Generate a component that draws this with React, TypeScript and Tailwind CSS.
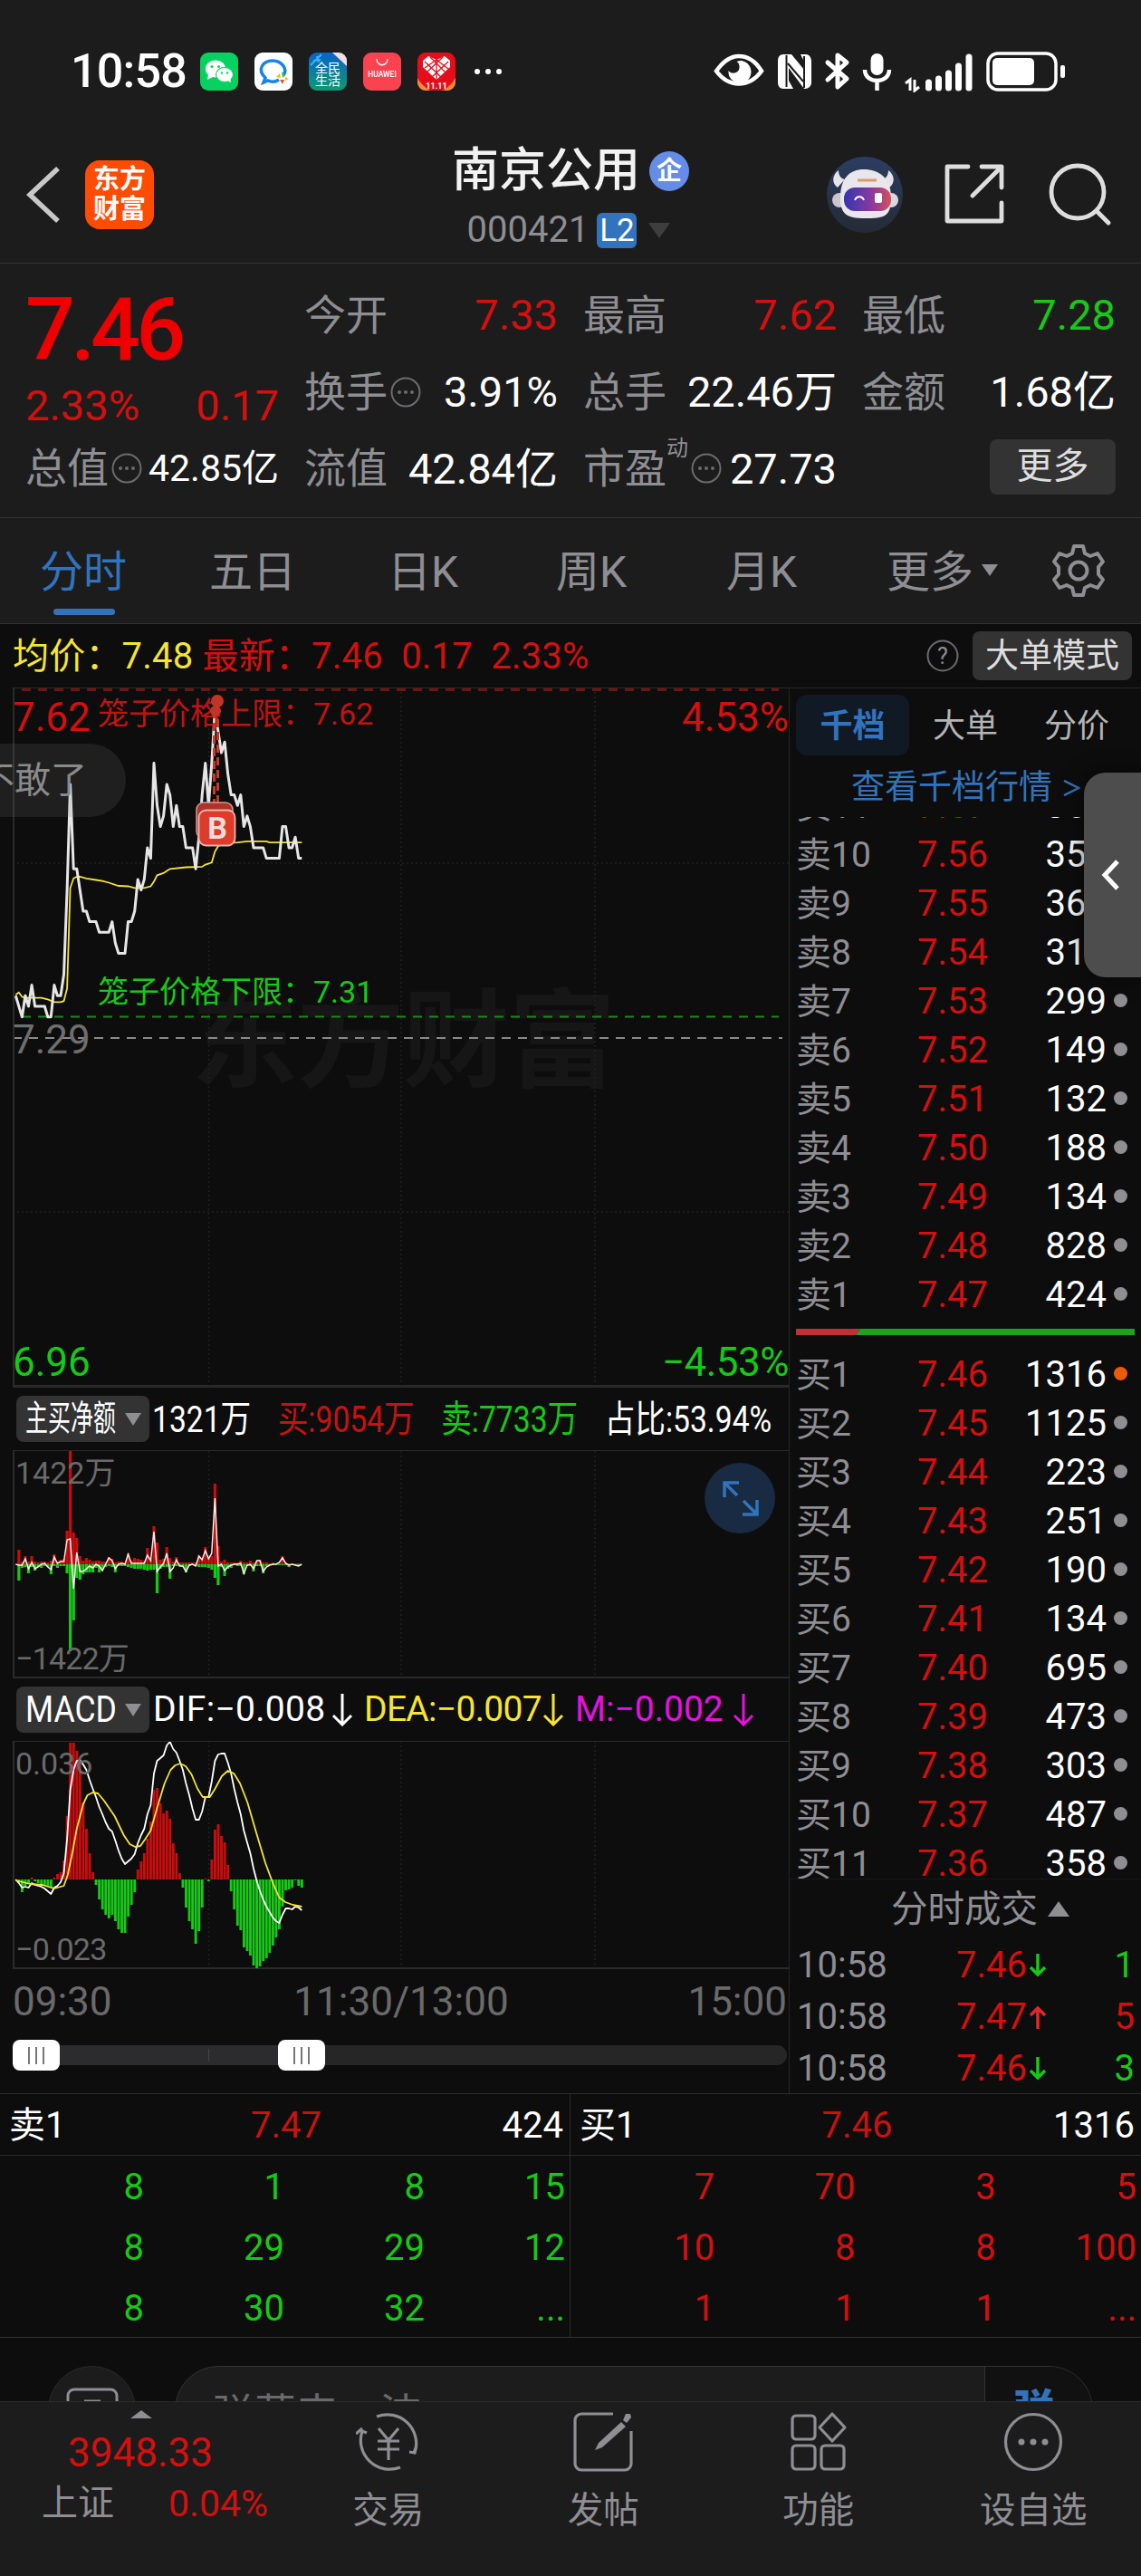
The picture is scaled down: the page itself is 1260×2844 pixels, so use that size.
import type { ReactNode } from "react";
import clsx from "clsx";

const MINUTE = 3.55;
const X0 = 3.3;

// minute prices, in cents above the previous close (7.29)
const PRICES = [
  4, 3, 2, 4, 3, 5, 3, 3, 3, 3, 2, 2, 5, 4, 4, 6, 14, 24, 16, 16, 14, 12, 12, 11, 11, 11, 10, 10, 10, 10,
  11, 9, 8, 8, 8, 11, 11, 12, 15, 14, 15, 18, 17, 26, 22, 20, 21, 24, 23, 20, 22, 20, 20, 18, 18, 18, 16, 19, 23, 26,
  22, 26, 31, 29, 27, 28, 25, 23, 23, 22, 23, 20, 21, 20, 18, 18, 18, 18, 17, 17, 17, 17, 17, 20, 20, 18, 18, 19, 17, 17,
];

// [minute, cents above previous close]
const AVERAGE: [number, number][] = [
  [0, 4.1], [1, 4.3], [2, 3.9], [3, 3.8], [8, 3.8], [10, 3.65], [12, 3.4], [14, 3.4], [15, 3.5], [16, 4.7], [17, 14.2],
  [18, 15.1], [19, 15.25], [20, 15.25], [22, 15.1], [25, 14.95], [27, 14.85], [29, 14.7], [32, 14.4], [35, 14.35],
  [37, 14.2], [40, 14.2], [42, 14.35], [43, 14.8], [44, 15.4], [46, 15.6], [47, 15.8], [48, 16], [53, 16.15],
  [58, 16.2], [59, 16.4], [61, 16.6], [62, 17.65], [63, 18.15], [64, 18.3], [66, 18.45], [69, 18.5], [72, 18.6],
  [78, 18.6], [79, 18.5], [89, 18.5],
];

const BUY = [
  0, 16, 3, 9, 3, 9, 3, 2, 3, 3, 2, 4, 11, 3, 5, 6, 37, 125, 35, 29, 9, 4, 7, 5, 3, 4, 4, 3, 3, 8,
  6, 2, 3, 3, 2, 12, 4, 7, 6, 5, 4, 18, 5, 42, 24, 5, 6, 19, 7, 3, 8, 2, 2, 2, 2, 2, 2, 10, 6, 19,
  8, 9, 89, 20, 3, 5, 2, 2, 2, 2, 4, 2, 2, 4, 2, 3, 5, 2, 2, 1, 2, 1, 2, 9, 2, 1, 1, 1, 1, 0,
];
const SELL = [
  0, 18, 4, 3, 10, 3, 7, 3, 4, 2, 3, 11, 2, 4, 2, 2, 10, 96, 62, 15, 17, 11, 9, 9, 9, 4, 9, 5, 3, 2,
  3, 9, 2, 2, 2, 3, 4, 5, 5, 5, 6, 7, 6, 6, 32, 5, 3, 3, 16, 2, 2, 2, 3, 9, 2, 1, 2, 3, 3, 3,
  4, 6, 15, 23, 3, 13, 5, 4, 1, 2, 2, 11, 2, 2, 8, 2, 2, 10, 2, 1, 1, 1, 1, 1, 1, 3, 1, 1, 1, 0,
];
const NET = [
  0, -1, -1, 6, -5, 2, -5, -3, 0, 1, -3, -6, 8, 1, 3, 3, 27, 28, -27, 13, -8, -8, -5, -2, -4, 0, -2, -7, 0, 7,
  4, -5, 0, 1, 0, 11, 1, 1, 1, 1, 1, 10, 4, 36, -8, -3, 1, 12, -8, -4, 5, -2, -2, -8, -1, 0, -2, 9, 5, 15,
  6, 12, 73, -2, 0, -7, -3, -1, 0, 0, 1, -10, -1, 0, -5, 4, 4, -8, -3, -1, 0, 0, 2, 7, 1, -1, 0, -1, -2, 0,
];

const MACD = [
  0, -4, -14, -7, -5, 2, -2, -4, -5, -7, -8, -9, 2, 6, 8, 21, 70, 151, 151, 142, 129, 85, 56, 29, 8, -6, -22, -33, -39, -43,
  -39, -46, -55, -59, -59, -41, -28, -14, 11, 20, 29, 45, 64, 99, 101, 84, 73, 76, 67, 40, 29, 7, -9, -31, -46, -55, -71, -57, -31, 1,
  -2, 22, 55, 61, 48, 41, 16, -13, -33, -51, -56, -75, -79, -84, -95, -98, -96, -90, -87, -81, -73, -64, -55, -30, -12, -11, -9, -1, -7, -9,
];
const DIF = [
  0, -4, -9, -8, -9, -4, -6, -7, -8, -10, -13, -16, -9, -7, -3, 7, 45, 99, 121, 131, 132, 127, 121, 110, 100, 91, 80, 72, 63, 56,
  53, 43, 32, 23, 17, 20, 23, 28, 40, 49, 56, 72, 82, 117, 131, 134, 137, 148, 152, 144, 140, 131, 121, 106, 93, 78, 66, 66, 75, 91,
  91, 108, 131, 138, 139, 139, 129, 117, 100, 85, 72, 54, 41, 29, 12, -2, -13, -22, -30, -36, -42, -46, -48, -39, -32, -32, -33, -30, -31, -34,
];
const DEA: [number, number][] = [
  [0, -1], [4.5, -5], [8.3, -6], [12, -10], [15, -7], [16.2, 5], [17.6, 29], [19, 56], [21, 83], [22.3, 93], [24, 96],
  [25.6, 95], [27.5, 87], [30.8, 70], [33.6, 49], [35.5, 39], [37.2, 36], [38.8, 37], [40.2, 44], [42, 54], [44, 79],
  [46.3, 106], [48.2, 121], [49.6, 126], [51.2, 128], [52.9, 125], [54.7, 116], [56.6, 100], [58.2, 91], [60.4, 91],
  [62, 100], [64.1, 114], [66, 120], [67.9, 117], [69.8, 106], [72.1, 85], [74.9, 51], [77.7, 18], [80.1, -5],
  [82, -20], [83.9, -25], [86.2, -28], [89, -30],
];

const SELLS: [string, string, string][] = [
  ["卖11", "7.57", "361"],
  ["卖10", "7.56", "350"],
  ["卖9", "7.55", "362"],
  ["卖8", "7.54", "314"],
  ["卖7", "7.53", "299"],
  ["卖6", "7.52", "149"],
  ["卖5", "7.51", "132"],
  ["卖4", "7.50", "188"],
  ["卖3", "7.49", "134"],
  ["卖2", "7.48", "828"],
  ["卖1", "7.47", "424"],
];

const BUYS: [string, string, string][] = [
  ["买1", "7.46", "1316"],
  ["买2", "7.45", "1125"],
  ["买3", "7.44", "223"],
  ["买4", "7.43", "251"],
  ["买5", "7.42", "190"],
  ["买6", "7.41", "134"],
  ["买7", "7.40", "695"],
  ["买8", "7.39", "473"],
  ["买9", "7.38", "303"],
  ["买10", "7.37", "487"],
  ["买11", "7.36", "358"],
];

const TRADES = [
  { time: "10:58", price: "7.46", up: false, volume: "1" },
  { time: "10:58", price: "7.47", up: true, volume: "5" },
  { time: "10:58", price: "7.46", up: false, volume: "3" },
];

function toPoints(values: number[] | [number, number][], zero: number, unit = 1) {
  return values
    .map((v, i) => {
      const [m, n] = Array.isArray(v) ? v : [i, v];
      return `${(X0 + m * MINUTE).toFixed(1)},${(zero - n * unit).toFixed(1)}`;
    })
    .join(" ");
}

function StatusBar() {
  return (
    <div className="flex h-[158px] items-center justify-between pl-[78px] pr-[84px]">
      <div className="flex items-center">
        <span className="w-[143px] text-[52px] font-medium leading-none tracking-[-0.8px] text-white">10:58</span>
        <div className="flex items-center gap-[18px]">
          <svg viewBox="0 0 42 42" className="size-[42px]">
            <rect width="42" height="42" rx="9" fill="#07d160" />
            <ellipse cx="17" cy="18" rx="11" ry="9.500" fill="#fff" />
            <path d="M9 24l-1 6 6-3z" fill="#fff" />
            <ellipse cx="27" cy="24.500" rx="9.500" ry="8" fill="#fff" stroke="#07d160" strokeWidth="1.200" />
            <path d="M30 31l4 2-1-5z" fill="#fff" />
            <g fill="#07d160">
              <circle cx="13" cy="15.500" r="1.500" />
              <circle cx="20.500" cy="15.500" r="1.500" />
              <circle cx="24" cy="22.500" r="1.200" />
              <circle cx="30" cy="22.500" r="1.200" />
            </g>
          </svg>
          <svg viewBox="0 0 42 42" className="size-[42px]">
            <rect width="42" height="42" rx="9" fill="#fff" />
            <path d="M27 30c-3 2-8 3-12 1l-5 2 2-5C2 18 10 9 20 9s17 9 12 16" fill="none" stroke="#1684e8" strokeWidth="3.500" />
            <path d="M30 21l4 4-3 3z" fill="#2ebd59" />
            <path d="M24 27l4-4 1 5z" fill="#fbbc05" />
            <path d="M34 27l4 2-4 2z" fill="#fbbc05" />
            <path d="M28 30l5 0-2 5z" fill="#f04e23" />
          </svg>
          <svg viewBox="0 0 42 42" className="size-[42px]">
            <defs>
              <linearGradient id="life" x2="0" y2="1">
                <stop offset="0" stopColor="#0a62c9" />
                <stop offset="1" stopColor="#0d9a72" />
              </linearGradient>
            </defs>
            <rect width="42" height="42" rx="9" fill="url(#life)" />
            <path d="M2 14L14 2M5 9l8-1M9 4l2 7" stroke="#38b4f0" strokeWidth="2" />
            <path d="M26 0h7a9 9 0 0 1 9 9v6z" fill="#f2dfe2" />
            <g fill="#fff" fontSize="14" textAnchor="middle">
              <text x="14" y="22">全</text>
              <text x="28" y="22">民</text>
              <text x="14" y="36">生</text>
              <text x="28" y="36">活</text>
            </g>
          </svg>
          <svg viewBox="0 0 42 42" className="size-[42px]">
            <rect width="42" height="42" rx="9" fill="#fb4250" />
            <path d="M15 7c0 9 12 9 12 0" fill="none" stroke="#fff" strokeWidth="1.300" />
            <text x="21" y="27" textAnchor="middle" fontSize="8.500" fill="#fff" fontWeight="500">HUAWEI</text>
          </svg>
          <svg viewBox="0 0 42 42" className="size-[42px]">
            <rect width="42" height="42" rx="9" fill="#e60d1a" />
            <path d="M0 28c3 6 8 10 14 14H9a9 9 0 0 1-9-9zM42 28c-3 6-8 10-14 14h5a9 9 0 0 0 9-9z" fill="#f58a3a" />
            <path d="M21 30L6 16V9l6-5 9 4 9-4 6 5v7z" fill="#fff" />
            <path d="M8 10l18 17M14 5l17 17M21 8l13 10M34 10L16 27M28 5L11 21M21 8L8 17M21 4v26" stroke="#e60d1a" strokeWidth="1.300" />
            <text x="21" y="39.500" textAnchor="middle" fontSize="9" fill="#fff" fontWeight="700">11.11</text>
          </svg>
        </div>
        <div className="ml-[21px] flex gap-[6px]">
          <i className="size-[6px] rounded-full bg-white" />
          <i className="size-[6px] rounded-full bg-white" />
          <i className="size-[6px] rounded-full bg-white" />
        </div>
      </div>
      <svg viewBox="0 0 390 46" className="h-[46px] w-[390px]" fill="none">
        {/* eye comfort */}
        <path d="M5 22.500C13 11 21 6 30 6s18 5 25 16.500C48 32 39 36.500 30 36.500S12 32 5 22.500z" stroke="#fff" strokeWidth="4.500" />
        <path d="M33 11a12.500 12.500 0 1 1-14.500 11c2 4 12 4 12-4 0-3-1-5-3-6a12 12 0 0 1 5.500-1z" fill="#fff" />
        <g transform="translate(-3 0)">
          {/* nfc */}
          <path d="M82 4h9l14 17V12l-4-8h6c4 0 6 4 6 8v23c0 4-3 7-7 7h-1L88 19v14l5 9H82c-4 0-6-3-6-7V11c0-4 2-7 6-7z" fill="#fff" />
          <path d="M85.500 5v35M105 6v35M87 14l17 20" stroke="#1c1c1c" strokeWidth="2" />
          {/* bluetooth */}
          <path d="M131 13l21 18-10 9V5l10 8-21 19" stroke="#fff" strokeWidth="5" strokeLinejoin="round" strokeLinecap="round" />
          {/* microphone */}
          <rect x="178.500" y="3" width="14" height="24" rx="7" fill="#fff" />
          <path d="M172 21c0 16 27 16 27 0M185.500 34v10" stroke="#fff" strokeWidth="4.500" />
          {/* signal */}
          <path d="M217 36l5-4v12M232 40l-5 4V32" stroke="#fff" strokeWidth="3" />
          <path d="M242.500 35v6M253.500 31v10M264.500 25v16M275.500 17v24M287 7v34" stroke="#fff" strokeWidth="7" strokeLinecap="round" />
          {/* battery */}
          <rect x="308" y="3" width="75" height="40" rx="11" stroke="#fff" strokeWidth="3.500" />
          <rect x="313" y="8" width="46" height="30" rx="5" fill="#fff" />
          <rect x="388" y="16" width="5" height="14" rx="2" fill="#fff" />
        </g>
      </svg>
    </div>
  );
}

function Robot() {
  return (
    <svg viewBox="0 0 84 84" className="size-[84px]">
      <defs>
        <linearGradient id="robotBg" x2="0" y2="1">
          <stop offset="0" stopColor="#2b3d63" />
          <stop offset="1" stopColor="#252a35" />
        </linearGradient>
        <linearGradient id="visor">
          <stop offset="0" stopColor="#3535b0" />
          <stop offset="0.600" stopColor="#8b3a9c" />
          <stop offset="1" stopColor="#d8505c" />
        </linearGradient>
      </defs>
      <circle cx="42" cy="42" r="42" fill="url(#robotBg)" />
      <path d="M13 15c-7 5-8 14-1 19l8-9c-5-1-7-5-7-10zM68 15c7 5 8 14 1 19l-8-9c5-1 7-5 7-10z" fill="#e6e4e8" />
      <circle cx="14" cy="48" r="8" fill="#c9c6cc" />
      <circle cx="71" cy="48" r="8" fill="#dcd9de" />
      <path d="M15 45c0-21 10-31 26-31s30 9 30 31-8 23-29 23-27-5-27-23z" fill="#e9e7eb" />
      <rect x="19" y="34" width="52" height="26" rx="12" fill="url(#visor)" />
      <path d="M31 48c2-5 8-5 10 0" fill="none" stroke="#fff" strokeWidth="2" />
      <rect x="53" y="40" width="8" height="11" rx="2" fill="#fff" />
      <path d="M34 26h21" stroke="#d99b6c" strokeWidth="3" />
    </svg>
  );
}

function Header() {
  return (
    <header className="grid h-[133px] grid-cols-[1fr_auto_1fr] border-b border-[#343434]">
      <div className="flex items-start pl-[28px] pt-[19px]">
        <svg viewBox="0 0 38 62" className="mt-[7px] h-[62px] w-[38px]" fill="none" stroke="#c8c8c8" strokeWidth="5.500">
          <path d="M36 2L5 31l31 29" />
        </svg>
        <div className="ml-[28px] grid size-[76px] place-content-center rounded-[16px] bg-[#ff4c05] text-center text-[29px] font-bold leading-[33px] text-white">
          <span>东方</span>
          <span>财富</span>
        </div>
      </div>
      <div className="flex flex-col items-center pt-[5px]">
        <div className="flex items-center gap-[10px]">
          <h1 className="text-[52px] font-medium leading-[52px] text-[#f2f2f2]">南京公用</h1>
          <span className="grid size-[44px] place-content-center rounded-full bg-[#658de6] text-[28px] font-bold leading-none text-white">企</span>
        </div>
        <div className="-ml-[4px] mt-[19px] flex items-center">
          <span className="text-[40px] leading-[40px] text-[#8e8e93]">000421</span>
          <span className="ml-[9px] grid h-[39px] w-[44px] place-content-center rounded-[6px] bg-[#3173bd] text-[35px] leading-none text-white">L2</span>
          <svg viewBox="0 0 24 17" className="ml-[13px] h-[17px] w-[24px]">
            <path d="M0 0h24L12 17z" fill="#3e3e3e" />
          </svg>
        </div>
      </div>
      <div className="flex items-start justify-end gap-[46px] pr-[33px] pt-[15px]">
        <Robot />
        <svg viewBox="0 0 68 68" className="mt-[8px] size-[68px]" fill="none" stroke="#dedede" strokeWidth="4.800" strokeLinecap="round" strokeLinejoin="round">
          <path d="M26 3H3v60h60V43M41 3h22v23M63 3L31 35" />
        </svg>
        <svg viewBox="0 0 70 70" className="mt-[6px] size-[70px]" fill="none" stroke="#dedede" strokeWidth="4.800" strokeLinecap="round">
          <circle cx="33" cy="33" r="29" />
          <path d="M54 54l13 13" />
        </svg>
      </div>
    </header>
  );
}

function Dots({ className }: { className?: string }) {
  return (
    <svg viewBox="0 0 34 34" className={clsx("size-[34px]", className)}>
      <circle cx="17" cy="17" r="15.500" fill="none" stroke="#6c6c70" strokeWidth="2" />
      <g fill="#6c6c70">
        <circle cx="10" cy="17" r="2" />
        <circle cx="17" cy="17" r="2" />
        <circle cx="24" cy="17" r="2" />
      </g>
    </svg>
  );
}

interface QuoteCellProps {
  label: string;
  value: string;
  color?: string;
  info?: boolean;
  sup?: string;
  small?: boolean;
}

function QuoteCell({ label, value, color = "text-white", info, sup, small }: QuoteCellProps) {
  return (
    <div className="flex items-center justify-between whitespace-nowrap">
      <div className="flex items-center">
        <span className="text-[46px] leading-none text-[#8e8e93]">{label}</span>
        {sup && <span className="-mt-[44px] text-[24px] leading-none text-[#8e8e93]">{sup}</span>}
        {info && <Dots className="ml-[3px]" />}
      </div>
      <span className={clsx("leading-none", small ? "text-[41px]" : "text-[47px]", color)}>{value}</span>
    </div>
  );
}

function Quote() {
  return (
    <section className="grid h-[281px] grid-cols-4 grid-rows-[85px_85px_84px] gap-x-[28px] border-b border-[#343434] px-[28px] pt-[14px]">
      <div className="row-span-2">
        <div className="flex h-[114px] items-center pt-[5px] text-[97px] font-medium leading-none tracking-[-5px] text-[#ee0000]">7.46</div>
        <div className="flex h-[56px] items-center justify-between text-[47px] leading-none text-[#d40f0f]">
          <span>2.33%</span>
          <span>0.17</span>
        </div>
      </div>
      <QuoteCell label="今开" value="7.33" color="text-[#d40f0f]" />
      <QuoteCell label="最高" value="7.62" color="text-[#d40f0f]" />
      <QuoteCell label="最低" value="7.28" color="text-[#17c917]" />
      <QuoteCell label="换手" value="3.91%" info />
      <QuoteCell label="总手" value="22.46万" />
      <QuoteCell label="金额" value="1.68亿" />
      <QuoteCell label="总值" value="42.85亿" info small />
      <QuoteCell label="流值" value="42.84亿" />
      <QuoteCell label="市盈" value="27.73" sup="动" info />
      <div className="flex items-center justify-end">
        <button className="-mt-[4px] h-[61px] w-[139px] rounded-[8px] bg-[#333333] text-[40px] leading-none text-[#dedede]">更多</button>
      </div>
    </section>
  );
}

function Tabs() {
  return (
    <nav className="flex h-[117px] items-center border-b border-[#343434] pt-[3px] text-[48px] leading-none text-[#8e8e93]">
      <div className="relative w-[186px] pl-[44px] text-[#3173bd]">
        分时
        <i className="absolute -bottom-[23px] left-[59px] h-[7px] w-[68px] rounded-full bg-[#3173bd]" />
      </div>
      <span className="w-[186px] pl-[45px]">五日</span>
      <span className="w-[186px] pl-[56px]">日K</span>
      <span className="w-[186px] pl-[56px]">周K</span>
      <span className="w-[186px] pl-[58px]">月K</span>
      <span className="ml-[49px] flex items-center gap-[9px]">
        更多
        <svg viewBox="0 0 18 13" className="-mt-[4px] h-[13px] w-[18px]">
          <path d="M0 0h18L9 13z" fill="#8e8e93" />
        </svg>
      </span>
      <svg viewBox="0 0 60 60" className="-mt-[4px] ml-[59px] size-[60px]" fill="none" stroke="#8e8e93" strokeWidth="4" strokeLinejoin="round">
        <path d="M25 3h10l2 8 6 3 8-3 6 9-5 6v8l5 6-6 9-8-3-6 3-2 8H25l-2-8-6-3-8 3-6-9 5-6v-8l-5-6 6-9 8 3 6-3z" />
        <circle cx="30" cy="30" r="9.500" />
      </svg>
    </nav>
  );
}

function Grid({ height, rows = [] }: { height: number; rows?: number[] }) {
  return (
    <g stroke="#202020" strokeWidth="1.500" strokeDasharray="2 3">
      {[216.6, 429, 643].map((x) => (
        <path key={x} d={`M${x} 0V${height}`} />
      ))}
      {rows.map((y) => (
        <path key={y} d={`M0 ${y}H857`} />
      ))}
    </g>
  );
}

function PriceChart() {
  return (
    <div className="relative h-[773px] w-[857px] border-b-[3px] border-l-2 border-t border-[#2a2a2a]">
      <div className="absolute left-[195px] top-[332px] text-[118px] font-bold leading-none tracking-[-1px] text-[#161616]">东方财富</div>
      <svg viewBox="2 1 857 770" className="absolute left-0 top-0 h-[770px] w-[857px]" fill="none">
        <Grid height={773} rows={[194, 579]} />
        <path d="M10 2.500H846" stroke="#6e1414" strokeWidth="3" strokeDasharray="10 8" />
        <path d="M10 363.500H846" stroke="#1c8a1c" strokeWidth="2" strokeDasharray="10 8" />
        <path d="M0 387H850" stroke="#8a8a8a" strokeWidth="2" strokeDasharray="10 8" />
        <polyline points={toPoints(AVERAGE, 387, 11.67)} stroke="#f5e436" strokeWidth="1.800" />
        <polyline points={toPoints(PRICES, 387, 11.67)} stroke="#e6e6e6" strokeWidth="3" strokeLinejoin="round" />
      </svg>
      <div className="absolute -left-[16px] top-[61px] flex h-[81px] w-[139px] items-center overflow-hidden rounded-r-full bg-[#8080802a] text-[40px] leading-none text-[#8a8a8a]">
        <span className="-ml-[24px] whitespace-nowrap">不敢了</span>
      </div>
      <div className="absolute -left-[2px] right-0 top-[6px] flex items-center justify-between text-[44px] leading-[52px] text-[#d40f0f]">
        <span>7.62</span>
        <span>4.53%</span>
      </div>
      <div className="absolute left-[92px] top-[10px] text-[34px] leading-[36px] text-[#c21212]">笼子价格上限：7.62</div>
      <div className="absolute left-[92px] top-[317px] text-[34px] leading-[36px] text-[#17c917]">笼子价格下限：7.31</div>
      <div className="absolute -left-[2px] top-[362px] text-[44px] leading-[52px] text-[#6e6e6e]">7.29</div>
      <div className="absolute -left-[2px] right-0 top-[718px] flex items-center justify-between text-[44px] leading-[52px] text-[#17c917]">
        <span>6.96</span>
        <span className="tracking-[-0.5px]">−4.53%</span>
      </div>
      <svg viewBox="200 0 50 180" className="absolute left-[197px] top-0 h-[180px] w-[50px]">
        <path d="M223.500 24v106M227.500 20v114" stroke="#c63a28" strokeWidth="3" strokeDasharray="9 5" />
        <circle cx="227" cy="14" r="7" fill="#c03526" />
        <circle cx="225" cy="25" r="6" fill="#c03526" />
        <rect x="204" y="126" width="40" height="40" rx="8" fill="#b03228" stroke="#cf9a95" strokeWidth="1.500" />
        <rect x="206.500" y="134.500" width="40" height="39" rx="8" fill="#dd3c2c" stroke="#e8b4ae" strokeWidth="1.800" />
        <text x="227" y="165.500" textAnchor="middle" fontSize="34" fontWeight="700" fill="#f5dcd8">B</text>
      </svg>
    </div>
  );
}

function Picker({ children }: { children: ReactNode }) {
  return (
    <div className="ml-[4px] flex h-[51px] w-[147px] shrink-0 items-center justify-between rounded-[8px] bg-[#333333] pl-[10px] pr-[9px] text-white">
      {children}
      <svg viewBox="0 0 18 14" className="h-[14px] w-[18px] shrink-0">
        <path d="M0 0h18L9 14z" fill="#8e8e93" />
      </svg>
    </div>
  );
}

function FlowChart() {
  return (
    <>
      <div className="flex h-[69px] items-center whitespace-nowrap text-[41px] leading-none">
        <Picker>
          <span className="w-[100px] origin-left scale-x-[0.64] text-[39px]">主买净额</span>
        </Picker>
        <div className="ml-[3px] flex w-[850px] origin-left scale-x-[0.82] gap-[36px] pt-[2px] text-white">
          <span>1321万</span>
          <span className="text-[#c81212]">买:9054万</span>
          <span className="text-[#17c917]">卖:7733万</span>
          <span>占比:53.94%</span>
        </div>
      </div>
      <div className="relative h-[252px] w-[857px] border-b-2 border-l-2 border-t border-[#2a2a2a] text-[34px] leading-[40px] text-[#6a6a6a]">
        <svg viewBox="2 0 857 249" className="absolute left-0 top-0 h-[249px] w-[857px]" fill="none">
          <Grid height={249} />
          {BUY.map((v, i) => (
            <rect key={i} x={X0 + i * MINUTE - 1.6} y={125 - v} width="3.200" height={v} fill="#c90d0d" />
          ))}
          {SELL.map((v, i) => (
            <rect key={i} x={X0 + i * MINUTE - 1.6} y="125" width="3.200" height={v} fill="#17c917" />
          ))}
          <polyline points={toPoints(NET, 125)} stroke="#ffe9e9" strokeWidth="1.500" />
        </svg>
        <span className="absolute left-[1px] top-[4px]">1422万</span>
        <span className="absolute left-[1px] top-[209px] tracking-[-0.8px]">−1422万</span>
        <div className="absolute left-[762px] top-[13px] size-[78px] rounded-full bg-[#182b42]">
          <svg viewBox="0 0 78 78" fill="none" stroke="#2f74bd" strokeWidth="3.500">
            <path d="M22 38V22h16M22 22l14 14M42 57h16V41M58 57L43 42" />
          </svg>
        </div>
      </div>
    </>
  );
}

function DownArrow() {
  return (
    <svg viewBox="0 0 24 36" className="h-[36px] w-[24px] shrink-0" fill="none" stroke="currentColor" strokeWidth="3">
      <path d="M12 0v33M2 24l10 10 10-10" />
    </svg>
  );
}

function MacdChart() {
  return (
    <>
      <div className="flex h-[69px] items-center whitespace-nowrap text-[39px] leading-none">
        <Picker>
          <span className="w-[100px] origin-left scale-x-[0.89] text-[40px]">MACD</span>
        </Picker>
        <div className="ml-[4px] flex w-[233px] items-center justify-between pr-[12px] tracking-[0.3px] text-white">
          DIF:−0.008
          <DownArrow />
        </div>
        <div className="flex w-[233px] items-center justify-between pr-[12px] tracking-[-0.7px] text-[#f5e436]">
          DEA:−0.007
          <DownArrow />
        </div>
        <div className="flex w-[210px] items-center justify-between pr-[12px] text-[#e312de]">
          M:−0.002
          <DownArrow />
        </div>
      </div>
      <div className="relative h-[252px] w-[857px] border-b-2 border-l-2 border-t border-[#2a2a2a] text-[34px] leading-[40px] text-[#6a6a6a]">
        <svg viewBox="2 1 857 250" className="absolute left-0 top-0 h-[250px] w-[857px]" fill="none">
          <Grid height={250} />
          {MACD.map((v, i) => (
            <rect
              key={i}
              x={X0 + i * MINUTE - 1.4}
              y={v > 0 ? 153 - v : 153}
              width="2.900"
              height={Math.abs(v)}
              fill={v > 0 ? "#c90d0d" : "#17c917"}
            />
          ))}
          <polyline points={toPoints(DIF, 153)} stroke="#fff" strokeWidth="1.800" strokeLinejoin="round" />
          <polyline points={toPoints(DEA, 153)} stroke="#f5e436" strokeWidth="1.800" strokeLinejoin="round" />
        </svg>
        <span className="absolute left-[1px] top-[4px]">0.036</span>
        <span className="absolute left-[1px] top-[209px] tracking-[-0.7px]">−0.023</span>
      </div>
    </>
  );
}

function Handle({ className }: { className: string }) {
  return (
    <div className={clsx("absolute -top-[6px] flex h-[34px] w-[52px] items-center justify-center gap-[6px] rounded-[8px] bg-white", className)}>
      <i className="h-[19px] w-[2px] bg-[#777]" />
      <i className="h-[19px] w-[2px] bg-[#777]" />
      <i className="h-[19px] w-[2px] bg-[#777]" />
    </div>
  );
}

function TimeAxis() {
  return (
    <>
      <div className="flex h-[72px] w-[855px] items-center justify-between text-[44px] leading-none text-[#6a6a6a]">
        <span>09:30</span>
        <span className="ml-[3px]">11:30/13:00</span>
        <span>15:00</span>
      </div>
      <div className="relative mt-[12px] h-[22px] w-[855px] rounded-full bg-[#262626]">
        <div className="h-full w-[320px] rounded-full bg-[#2c2c2e]" />
        <i className="absolute left-[216px] top-[4px] h-[14px] w-px bg-[#444]" />
        <Handle className="left-0" />
        <Handle className="left-[293px]" />
      </div>
    </>
  );
}

function DepthRow({ row, hot }: { row: [string, string, string]; hot?: boolean }) {
  const [label, price, volume] = row;
  return (
    <div className="flex h-[54px] shrink-0 items-center pl-[7px] pt-[2px] leading-none">
      <span className="w-[134px] text-[39px] text-[#8e8e93]">{label}</span>
      <span className="w-[90px] text-[40px] text-[#d40f0f]">{price}</span>
      <span className="w-[119px] text-right text-[40px] text-white">{volume}</span>
      <i className={clsx("-mt-[4px] ml-[8px] size-[15px] rounded-full", hot ? "bg-[#ec5b05]" : "bg-[#8e8e93]")} />
    </div>
  );
}

function DepthPanel() {
  return (
    <aside className="relative flex h-[1552px] w-[389px] flex-col border-l border-t border-[#262626]">
      <div className="flex h-[67px] items-center pl-[7px] pt-[14px] text-[36px] leading-none text-[#b4b4b4]">
        <span className="grid h-[67px] w-[125px] shrink-0 place-content-center rounded-[12px] bg-[#111a24] pt-[2px] font-bold text-[#3173bd]">千档</span>
        <span className="ml-[26px] pt-[2px]">大单</span>
        <span className="ml-[51px] pt-[2px]">分价</span>
      </div>
      <div className="mt-[24px] flex h-[37px] items-center gap-[12px] whitespace-nowrap pl-[68px] text-[37px] leading-none text-[#3173bd]">
        查看千档行情
        <svg viewBox="0 0 19 18" className="h-[18px] w-[19px]" fill="none" stroke="currentColor" strokeWidth="2.500">
          <path d="M1 1l16 8-16 8" />
        </svg>
      </div>
      <div className="mt-[14px] flex h-[554px] flex-col justify-end overflow-hidden">
        {SELLS.map((row) => (
          <DepthRow key={row[0]} row={row} />
        ))}
      </div>
      <svg viewBox="0 0 374 7" className="ml-[7px] mt-[11px] h-[7px] w-[374px] shrink-0">
        <path d="M0 0h71l-5 7H0z" fill="#c43030" />
        <path d="M71 0h303v7H66z" fill="#1aa51a" />
      </svg>
      <div className="mt-[16px] flex h-[585px] shrink-0 flex-col overflow-hidden border-b border-[#181818]">
        {BUYS.map((row, i) => (
          <DepthRow key={row[0]} row={row} hot={i === 0} />
        ))}
      </div>
      <div className="flex h-[65px] shrink-0 items-center gap-[11px] pl-[112px] pt-[2px] text-[40.500px] leading-none text-[#8e8e93]">
        分时成交
        <svg viewBox="0 0 24 17" className="-mt-[3px] h-[17px] w-[24px]">
          <path d="M0 17h24L12 0z" fill="#8e8e93" />
        </svg>
      </div>
      {TRADES.map((t, i) => (
        <div key={i} className="flex h-[57px] shrink-0 items-center pl-[8px] pr-[7px] pt-[2px] text-[40px] leading-none text-[#d40f0f]">
          <span className="w-[176px] text-[#8e8e93]">{t.time}</span>
          <span>{t.price}</span>
          <svg viewBox="0 0 18 26" className={clsx("ml-[3px] h-[26px] w-[18px]", t.up ? "text-[#e02828]" : "text-[#17c917]")} fill="none" stroke="currentColor" strokeWidth="3.500">
            {t.up ? <path d="M9 26V3M1 11l8-8 8 8" /> : <path d="M9 0v23M1 15l8 8 8-8" />}
          </svg>
          <span className={clsx("ml-auto", t.up ? "text-[#d40f0f]" : "text-[#17c917]")}>{t.volume}</span>
        </div>
      ))}
      <button className="absolute right-0 top-[93px] grid h-[226px] w-[63px] place-content-center rounded-l-[24px] bg-[#4d4d4d] shadow-[0_0_24px_#0009]">
        <svg viewBox="0 0 20 34" className="mr-[6px] h-[34px] w-[20px]" fill="none" stroke="#fff" strokeWidth="5">
          <path d="M18 2L4 17l14 15" />
        </svg>
      </button>
    </aside>
  );
}

interface QueueProps {
  label: string;
  price: string;
  volume: string;
  cells: string[];
  color: string;
  className?: string;
}

function Queue({ label, price, volume, cells, color, className }: QueueProps) {
  return (
    <div className={clsx("w-[630px] text-[40px] leading-none", className)}>
      <div className="grid h-[68px] grid-cols-3 items-center border-b border-[#2a2a2a] pl-[10px] pr-[7px] pt-[3px] text-white">
        <span>{label}</span>
        <span className="text-center text-[#c81212]">{price}</span>
        <span className="text-right">{volume}</span>
      </div>
      <div className={clsx("grid grid-cols-4 pl-[4px] pr-[5px] pt-[1px] text-right", color)}>
        {cells.map((c, i) => (
          <span key={i} className="h-[67px] leading-[67px]">{c}</span>
        ))}
      </div>
    </div>
  );
}

function BarrageBar() {
  return (
    <div className="flex h-[70px] items-start overflow-hidden pl-[53px] pt-[31px]">
      <div className="grid size-[97px] shrink-0 place-content-center rounded-full border border-[#2a2a2a] bg-[#1c1c1c]">
        <svg viewBox="0 0 58 50" className="h-[50px] w-[58px]" fill="none" stroke="#8e8e93" strokeWidth="3">
          <rect x="2" y="2" width="54" height="46" rx="7" />
          <path d="M20 15h18M20 20h18" />
        </svg>
      </div>
      <div className="ml-[43px] flex h-[97px] w-[1014px] shrink-0 overflow-hidden rounded-full border border-[#333] bg-[#1c1c1c]">
        <span className="grow pl-[41px] pt-[29px] text-[46px] leading-[46px] text-[#6a6a6a]">弹幕来一波</span>
        <span className="w-[119px] border-l border-[#333] bg-[#111] pl-[31px] pt-[24px] text-[46px] font-black leading-[46px] text-[#3173bd]">弹</span>
      </div>
    </div>
  );
}

function NavItem({ label, children }: { label: string; children: ReactNode }) {
  return (
    <div className="flex w-[237.500px] flex-col items-center pt-[8px] text-[39.500px] leading-none text-[#8e8e93]">
      <svg viewBox="0 0 72 72" className="size-[72px]" fill="none" stroke="currentColor" strokeWidth="3.200">
        {children}
      </svg>
      <span className="mt-[20px]">{label}</span>
    </div>
  );
}

function BottomNav() {
  return (
    <nav className="flex h-[193px] border-t border-[#2a2a2a] bg-[#1c1c1c]">
      <div className="w-[310px] text-[#d40f0f]">
        <svg viewBox="0 0 24 9" className="ml-[144px] mt-[9px] h-[9px] w-[24px]">
          <path d="M0 9h24L12 0z" fill="#8e8e93" />
        </svg>
        <div className="mt-[16px] text-center text-[44px] leading-[44px]">3948.33</div>
        <div className="mt-[13px] flex items-center justify-between pl-[46px] pr-[14px] leading-[42px]">
          <span className="text-[40px] text-[#8e8e93]">上证</span>
          <span className="text-[41px]">0.04%</span>
        </div>
      </div>
      <NavItem label="交易">
        <path d="M23 8a32 32 0 0 1 42 40l-6-1M67 40l-3 8M49 64A32 32 0 0 1 7 24l5 2M0 27l7-6" />
        <path d="M25 21l11 13 11-13M36 34v22M24 35h24M24 44h24" />
      </NavItem>
      <NavItem label="发帖">
        <path d="M47 5H12a7 7 0 0 0-7 7v48a7 7 0 0 0 7 7h48a7 7 0 0 0 7-7V24" />
        <path d="M27 45l4-8 25-23 5 5-26 23z" fill="currentColor" stroke="none" />
        <path d="M58 12l3-7 5 0 1 4-5 6z" fill="currentColor" stroke="none" />
      </NavItem>
      <NavItem label="功能">
        <rect x="7" y="7" width="25" height="26" rx="4" />
        <rect x="7" y="40" width="25" height="26" rx="4" />
        <rect x="39" y="40" width="25" height="26" rx="4" />
        <path d="M51 5l14 15-14 15-14-15z" strokeLinejoin="round" />
      </NavItem>
      <NavItem label="设自选">
        <circle cx="36" cy="36" r="30.500" />
        <g fill="currentColor" stroke="none">
          <circle cx="23" cy="36" r="3.500" />
          <circle cx="36" cy="36" r="3.500" />
          <circle cx="49" cy="36" r="3.500" />
        </g>
      </NavItem>
    </nav>
  );
}

export default function App() {
  return (
    <div className="h-[2844px] w-[1260px] overflow-hidden bg-[#0d0d0d] font-[Roboto,'Noto_Sans_CJK_SC',sans-serif]">
      <div className="bg-[#1c1c1c]">
        <StatusBar />
        <Header />
        <Quote />
        <Tabs />
      </div>
      <div className="flex h-[70px] items-center justify-between pl-[14px] pr-[10px] text-[40px] leading-none">
        <div className="whitespace-pre pt-[2px] tracking-[0.2px] text-[#d40f0f]">
          <span className="text-[#f5e436]">均价：7.48</span>
          {" 最新：7.46  0.17  2.33%"}
        </div>
        <div className="flex items-center gap-[15px]">
          <svg viewBox="0 0 36 36" className="size-[36px]">
            <circle cx="18" cy="18" r="16.500" fill="none" stroke="#6c6c70" strokeWidth="2" />
            <text x="18" y="27" textAnchor="middle" fontSize="25" fill="#8e8e93">?</text>
          </svg>
          <button className="h-[54px] w-[176px] rounded-[8px] bg-[#333333] text-[37px] leading-none text-[#dedede]">大单模式</button>
        </div>
      </div>
      <main className="flex h-[1553px] border-b border-[#2e2e2e]">
        <div className="w-[871px] pl-[14px]">
          <PriceChart />
          <FlowChart />
          <MacdChart />
          <TimeAxis />
        </div>
        <DepthPanel />
      </main>
      <div className="flex h-[269px] border-b border-[#333]">
        <Queue
          label="卖1"
          price="7.47"
          volume="424"
          cells={["8", "1", "8", "15", "8", "29", "29", "12", "8", "30", "32", "..."]}
          color="text-[#17c917]"
          className="border-r border-[#2a2a2a]"
        />
        <Queue
          label="买1"
          price="7.46"
          volume="1316"
          cells={["7", "70", "3", "5", "10", "8", "8", "100", "1", "1", "1", "..."]}
          color="text-[#d40f0f]"
        />
      </div>
      <BarrageBar />
      <BottomNav />
    </div>
  );
}
